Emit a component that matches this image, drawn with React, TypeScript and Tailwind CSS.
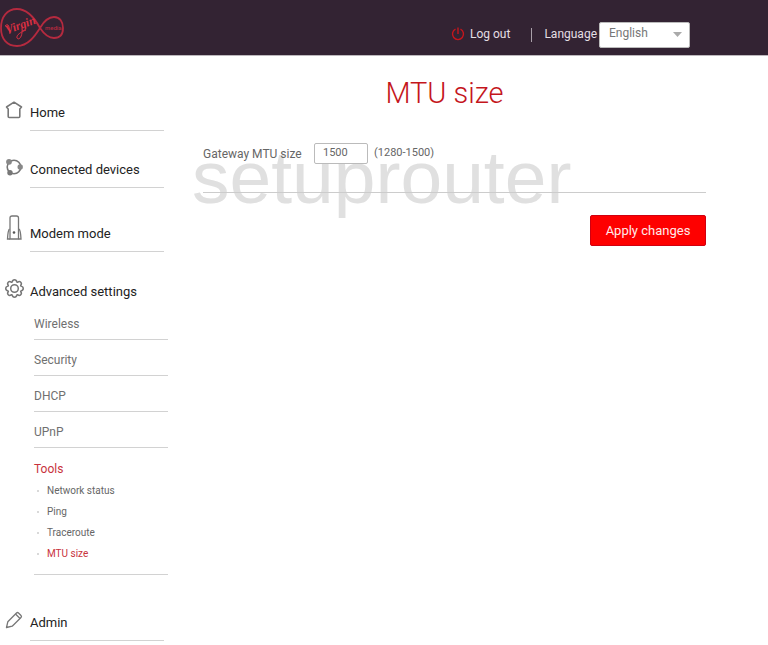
import type { ReactNode } from 'react';
import { useState } from 'react';
import clsx from 'clsx';

function VirginLogo() {
  return (
    <svg className="h-14 w-16" viewBox="0 0 64 56" fill="none" role="img" aria-label="Virgin Media">
      <path
        d="M40 28C34 17 27 9 17 9C7 9 1 17 1 28C1 39 7 46 17 46C28 46 35 36 40 28C44 21 48 17 54 17C60 17 63 22 63 28C63 34 60 38 54 38C48 38 44 34 40 28Z"
        stroke="#b52a3f"
        strokeWidth="1.8"
      />
      <text
        x="7"
        y="34"
        transform="rotate(-20 7 34)"
        fill="#d92f42"
        className="font-['Liberation_Serif',serif] text-[12px] font-bold italic"
      >
        Virgin
      </text>
      <path d="M5 26Q8 23 9 27L10 34M22 28C23 36 19 41 17 38C16 35 21 32 26 30" stroke="#d92f42" />
      <text x="45" y="30" fill="#b52a3f" className="text-[6px] font-medium">
        media
      </text>
    </svg>
  );
}

function PowerIcon() {
  return (
    <svg className="size-[14px]" viewBox="0 0 14 14" fill="none" stroke="#c5161d" strokeWidth="1.4" aria-hidden="true">
      <path d="M4.5 2.2A5.5 5.5 0 1 0 9.5 2.2" />
      <path d="M7 .5V7" />
    </svg>
  );
}

function HomeIcon() {
  return (
    <svg className="size-[18px]" viewBox="0 0 18 18" fill="none" stroke="#777" strokeWidth="1.6" strokeLinejoin="round" aria-hidden="true">
      <path d="M1.5 6L9 1.2L16.5 6L14.8 8V15.5Q14.8 16.5 13.8 16.5H4.2Q3.2 16.5 3.2 15.5V8Z" />
    </svg>
  );
}

function DevicesIcon() {
  return (
    <svg className="size-[18px]" viewBox="0 0 18 18" fill="none" aria-hidden="true">
      <circle cx="9" cy="9" r="6.8" stroke="#777" strokeWidth="1.6" />
      <circle cx="4" cy="3.8" r="2.9" fill="#888" />
      <circle cx="15.2" cy="9" r="2.7" fill="#888" />
      <circle cx="5" cy="14.8" r="2.7" fill="#777" />
    </svg>
  );
}

function ModemIcon() {
  return (
    <svg className="h-[25px] w-[18px]" viewBox="0 0 18 25" fill="none" stroke="#777" strokeWidth="1.3" aria-hidden="true">
      <path d="M5 24V3Q5 1 7 1H11.5Q13.5 1 13.5 3V24Z" />
      <path d="M4.5 14Q3 15 2.5 24H5M14 14Q15.500 15 16 24H13.5" />
      <circle cx="9" cy="17.5" r="1.3" fill="#555" stroke="none" />
    </svg>
  );
}

// Eight rounded lobes around the hub
function GearIcon() {
  return (
    <svg className="size-[19px]" viewBox="0 0 20 20" fill="none" stroke="#777" strokeWidth="1.6" strokeLinejoin="round" aria-hidden="true">
      <path d="M7.5 3.2Q8 .8 10 .8T12.5 3.2L13.2 3.5Q15.2 2 16.6 3.4T16.5 6.8L16.8 7.5Q19.2 8 19.2 10T16.8 12.5L16.5 13.2Q18 15.2 16.6 16.6T13.2 16.5L12.5 16.8Q12 19.2 10 19.2T7.5 16.8L6.8 16.5Q4.8 18 3.4 16.6T3.5 13.2L3.2 12.5Q.8 12 .8 10T3.2 7.5L3.5 6.8Q2 4.8 3.4 3.4T6.8 3.5Z" />
      <circle cx="10" cy="10" r="4" />
    </svg>
  );
}

function PencilIcon() {
  return (
    <svg className="size-[18px]" viewBox="0 0 18 18" fill="none" stroke="#777" strokeWidth="1.3" strokeLinejoin="round" aria-hidden="true">
      <path d="M1.5 16.5L2.8 10.8L11.5 2Q12.5 1 13.5 2L16 4.5Q17 5.500 16 6.5L7.2 15.2Z" />
      <path d="M10.5 3L15 7.500" />
    </svg>
  );
}

interface NavItemProps {
  icon: ReactNode;
  label: string;
  underlined?: boolean;
}

function NavItem({ icon, label, underlined = true }: NavItemProps) {
  return (
    <a href="#" className="mr-1 flex items-end text-[13px] leading-5 text-[#222]">
      <span className={clsx('w-[25px] shrink-0', underlined ? 'mb-3' : 'mb-1')}>{icon}</span>
      <span className={clsx('flex-1', underlined && 'border-b border-[#d2d2d2] pb-[7px]')}>{label}</span>
    </a>
  );
}

const settings = ['Wireless', 'Security', 'DHCP', 'UPnP'];
const tools = ['Network status', 'Ping', 'Traceroute', 'MTU size'];

function Sidebar() {
  return (
    <nav className="w-[168px] shrink-0 pl-[5px]">
      <ul className="flex flex-col gap-[27px]">
        <li><NavItem icon={<HomeIcon />} label="Home" /></li>
        <li><NavItem icon={<DevicesIcon />} label="Connected devices" /></li>
        <li><NavItem icon={<ModemIcon />} label="Modem mode" /></li>
        <li>
          <NavItem icon={<GearIcon />} label="Advanced settings" underlined={false} />
          <ul className="mb-[9px] ml-[29px] pt-[2px] text-[12px] leading-5 text-[#707070]">
            {settings.map((name) => (
              <li key={name} className="border-b border-[#d2d2d2] pt-[10px] pb-[5px]">
                <a href="#">{name}</a>
              </li>
            ))}
            <li className="border-b border-[#d2d2d2] pt-[11px] pb-[10px]">
              <a href="#" className="text-[#c8323c]">Tools</a>
              <ul className="mt-px text-[10px] leading-[21px]">
                {tools.map((name) => (
                  <li key={name} className="flex items-center gap-2 pl-[3px]">
                    <span className="size-[2px] rounded-full bg-[#ccc]" />
                    <a href="#" className={name === 'MTU size' ? 'text-[#c8323c]' : 'text-[#666]'}>
                      {name}
                    </a>
                  </li>
                ))}
              </ul>
            </li>
          </ul>
        </li>
        <li><NavItem icon={<PencilIcon />} label="Admin" /></li>
      </ul>
    </nav>
  );
}

function Header() {
  return (
    <header className="flex h-14 items-center justify-between border-b border-[#bdb8bd] bg-[#332333] pr-[78px] text-[12px] text-[#e4dfe4]">
      <a href="#"><VirginLogo /></a>
      <div className="flex items-center pt-[14px]">
        <button type="button" className="flex items-center gap-[5px] pb-[2px]">
          <PowerIcon />
          Log out
        </button>
        <span className="mr-3 ml-[21px] h-[14px] w-px bg-[#a9a0a9]" />
        <label htmlFor="language" className="pb-[2px]">Language</label>
        <div className="relative ml-[2px]">
          <select
            id="language"
            className="block h-[26px] w-[91px] appearance-none rounded-xs border border-[#bbb] bg-white pb-[3px] pl-[9px] text-[12px] text-[#777]"
          >
            <option>English</option>
          </select>
          <svg className="pointer-events-none absolute top-[10px] right-2 h-[5px] w-[9px]" viewBox="0 0 9 5" aria-hidden="true">
            <path d="M0 0H9L4.5 5Z" fill="#aaa" />
          </svg>
        </div>
      </div>
    </header>
  );
}

function MtuForm() {
  const [mtu, setMtu] = useState('1500');

  return (
    <main className="relative mr-[62px] ml-[15px] flex-1">
      {/* Watermark sits behind the form */}
      <span className="pointer-events-none absolute top-[34px] left-[9px] font-['Liberation_Sans',sans-serif] text-[75px] leading-[84px] text-[#e0e0e0]">
        setuprouter
      </span>
      <h1 className="-mt-[26px] text-center text-[29px] leading-9 font-light text-[#c4161c]">MTU size</h1>
      <form className="relative pl-5" onSubmit={(e) => e.preventDefault()}>
        <div className="flex items-center border-b border-[#ccc] pt-8 pb-7 text-[11px] text-[#666]">
          <label htmlFor="mtu" className="w-[111px] text-[12px]">Gateway MTU size</label>
          <input
            id="mtu"
            type="text"
            value={mtu}
            onChange={(e) => setMtu(e.target.value)}
            className="h-[21px] w-[54px] rounded-xs border border-[#bbb] bg-white px-2 pb-[2px]"
          />
          <span className="ml-[6px]">(1280-1500)</span>
        </div>
        <div className="mt-[22px] flex justify-end">
          <button type="submit" className="h-[31px] w-[116px] rounded-xs border border-[#d00010] bg-[#fe0000] text-[13px] text-[#ffeaea]">
            Apply changes
          </button>
        </div>
      </form>
    </main>
  );
}

export default function App() {
  return (
    <div className="min-h-screen bg-white font-[Roboto,sans-serif]">
      <Header />
      <div className="flex pt-[45px]">
        <Sidebar />
        <MtuForm />
      </div>
    </div>
  );
}
